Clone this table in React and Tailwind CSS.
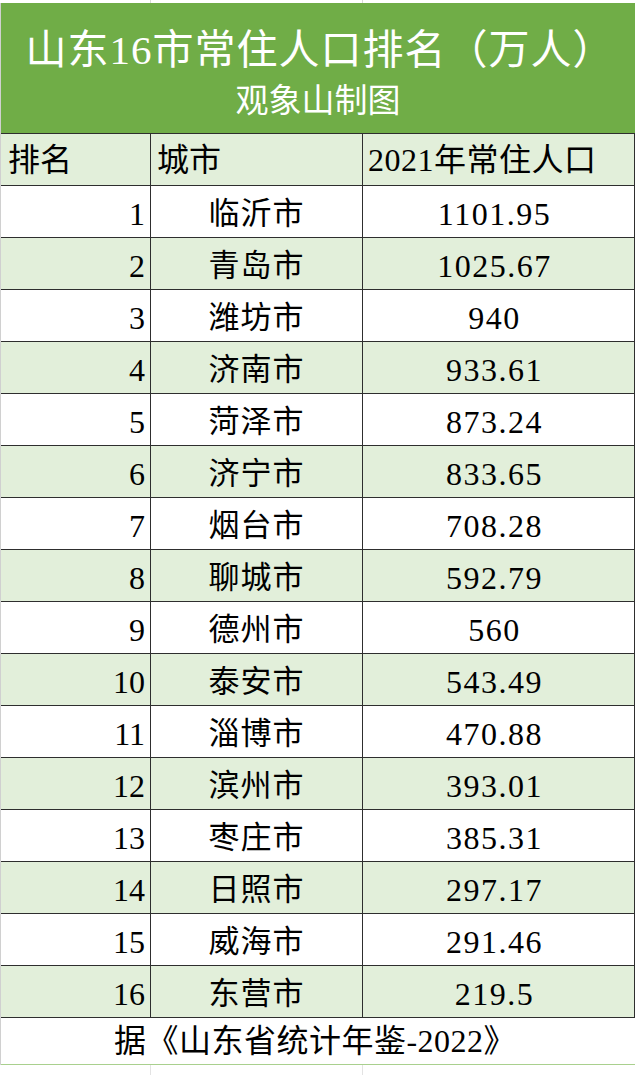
import React from 'react';

const rows = [
  [1, '临沂市', '1101.95'],
  [2, '青岛市', '1025.67'],
  [3, '潍坊市', '940'],
  [4, '济南市', '933.61'],
  [5, '菏泽市', '873.24'],
  [6, '济宁市', '833.65'],
  [7, '烟台市', '708.28'],
  [8, '聊城市', '592.79'],
  [9, '德州市', '560'],
  [10, '泰安市', '543.49'],
  [11, '淄博市', '470.88'],
  [12, '滨州市', '393.01'],
  [13, '枣庄市', '385.31'],
  [14, '日照市', '297.17'],
  [15, '威海市', '291.46'],
  [16, '东营市', '219.5'],
];

const font = "font-['Liberation_Serif','Noto_Sans_CJK_SC',serif]";

export default function App() {
  return (
    <div className={`w-[640px] h-[1075px] bg-white overflow-hidden ${font} text-black`}>
      {/* excel gridlines above the sheet */}
      <div className="grid grid-cols-[151px_212px_272px] h-[3px]">
        <div className="border-r border-[#d9d9d9]" />
        <div className="border-r border-[#d9d9d9]" />
        <div />
      </div>

      <div className="w-[635px] border-l border-[#d0d0d0]">
        {/* title block */}
        <div className="h-[131px] bg-[#70ad47] flex flex-col items-center text-white leading-none border-b border-[#2e2e2e]">
          <div className="mt-[27px] text-[41px] tracking-[1px] pl-[4px]">山东16市常住人口排名（万人）</div>
          <div className="mt-[14px] text-[33px] font-normal">观象山制图</div>
        </div>

        {/* column header */}
        <div className="grid grid-cols-[150px_212px_272px] h-[52px] bg-[#e2efda] border-b border-[#2e2e2e] text-[32px] leading-none">
          <div className="border-r border-[#2e2e2e] flex items-center pl-[7px]">排名</div>
          <div className="border-r border-[#2e2e2e] flex items-center pl-[6px]">城市</div>
          <div className="border-r border-[#2e2e2e] flex items-center pl-[5px] tracking-[0.5px]">2021年常住人口</div>
        </div>

        {rows.map(([rank, city, pop]) => (
          <div
            key={rank}
            className={`grid grid-cols-[150px_212px_272px] h-[52px] border-b border-[#2e2e2e] leading-none ${rank % 2 === 0 ? 'bg-[#e2efda]' : 'bg-white'}`}
          >
            <div className="border-r border-[#2e2e2e] flex items-center justify-end pr-[5px] pt-[4px] text-[32px]">{rank}</div>
            <div className="border-r border-[#2e2e2e] flex items-center justify-center pt-[3px] text-[31px] tracking-[1px]">{city}</div>
            <div className="border-r border-[#2e2e2e] flex items-center justify-center pt-[4px] pr-[8px] text-[32px] tracking-[1.5px]">{pop}</div>
          </div>
        ))}

        {/* source footer */}
        <div className="h-[47px] flex items-center justify-center text-[32px] leading-none pr-[6px] tracking-[0.5px] border-b border-[#a9d08e]">
          据《山东省统计年鉴-2022》
        </div>
      </div>

      <div className="grid grid-cols-[151px_212px_272px] h-[12px]">
        <div className="border-r border-[#e3e3e3]" />
        <div className="border-r border-[#e3e3e3]" />
        <div />
      </div>
    </div>
  );
}
